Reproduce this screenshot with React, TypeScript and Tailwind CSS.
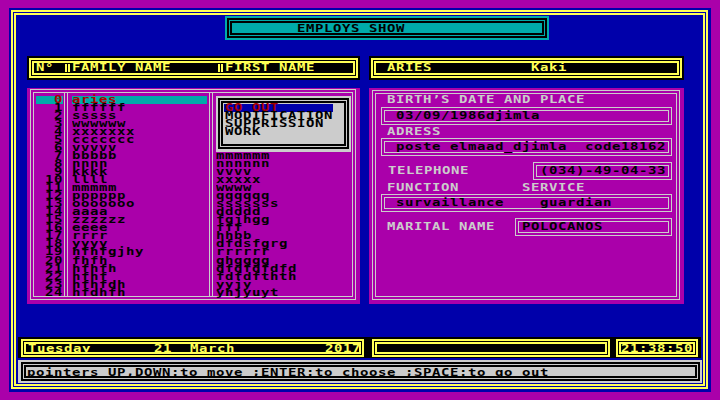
import React from "react";

const family = [
  "aries", "ffffff", "sssss", "wwwwww", "xxxxxxx", "ccccccc", "vvvvv", "bbbbb", "nnnn", "kkkk",
  "llll", "mmmmm", "pppppp", "ooooooo", "aaaa", "zzzzzz", "eeee", "rrrr", "yyyy", "hfhfgjhy",
  "fhfh", "hfhfh", "hfhf", "hfhfdh", "hfdhfh",
];

const firstNames = [
  "", "", "", "", "", "", "", "mmmmmm", "nnnnnn", "vvvv",
  "xxxxx", "wwww", "qqqqqq", "sssssss", "ddddd", "fgjhgg", "fff", "hhbb", "dfdsfgrg", "rrrrrr",
  "ghgggg", "dfdfdfdfd", "fdfdfthth", "yyjy", "yhjyuyt",
];

const menu = ["GO OUT", "MODIFICATION", "SUPPRISSION", "WORK"];

// squashed text so the 9px-wide glyphs fit an 8px DOS text row
function T({ children }: { children: React.ReactNode }) {
  return <span className="inline-block align-top h-[8px] scale-y-[0.7]">{children}</span>;
}

function YSep() {
  return <span className="inline-block align-top w-[5px] h-[8px] mx-[2px] border-x-2 border-[#ffff55]" />;
}

function Field({ className, children }: { className: string; children: React.ReactNode }) {
  return (
    <div className={"h-[18px] border-[4px] border-double border-[#cccccc] pt-[1px] text-black " + className}>
      <T>{children}</T>
    </div>
  );
}

function ListPanel() {
  return (
    <div className="w-[333px] h-[216px] bg-[#aa00aa] pt-[1px] pl-[3px] pr-[4px] pb-[4px]">
      <div className="h-full border-[4px] border-double border-[#cccccc] flex pl-[2px]">
        <div className="w-[27px] pt-[3px] text-right">
          {family.map((_, i) => (
            <div key={i} className={i === 0 ? "h-[8px] bg-[#00aaaa] text-[#aa0000]" : "h-[8px] text-black"}>
              <T>{i}</T>
            </div>
          ))}
        </div>
        <div className="w-[9px] h-full flex">
          <div className="ml-[1px] w-[1px] bg-[#cccccc]" />
          <div className="ml-[2px] w-[1px] bg-[#cccccc]" />
        </div>
        <div className="w-[135px] pt-[3px]">
          {family.map((n, i) => (
            <div key={i} className={i === 0 ? "h-[8px] bg-[#00aaaa] text-[#aa0000]" : "h-[8px] text-black"}>
              <T>{n}</T>
            </div>
          ))}
        </div>
        <div className="w-[9px] h-full flex">
          <div className="ml-[2px] w-[1px] bg-[#cccccc]" />
          <div className="ml-[2px] w-[1px] bg-[#cccccc]" />
        </div>
        <div className="relative w-[135px] pt-[3px]">
          {firstNames.map((n, i) => (
            <div key={i} className="h-[8px] text-black">
              {n && <T>{n}</T>}
            </div>
          ))}
          <div className="absolute top-[3px] left-0 w-[135px] h-[56px] bg-[#cccccc] pt-[2px] pl-[2px] pr-[2px] pb-[3px]">
            <div className="h-full border-[5px] border-double border-black pt-[1px] pl-[1px]">
              {menu.map((m, i) => (
                <div key={m} className={i === 0 ? "w-[109px] h-[8px] pl-[1px] bg-[#0000aa] text-[#aa0000]" : "h-[8px] pl-[1px] text-black"}>
                  <T>{m}</T>
                </div>
              ))}
            </div>
          </div>
        </div>
      </div>
    </div>
  );
}

function DetailPanel() {
  return (
    <div className="w-[315px] h-[216px] bg-[#aa00aa] pt-[2px] pl-[3px] pr-[4px] pb-[4px]">
      <div className="h-full border-[4px] border-double border-[#cccccc] flex flex-col text-[#cccccc]">
        <div className="mt-[2px] ml-[11px] h-[8px]"><T>BIRTH’S DATE AND PLACE</T></div>
        <Field className="mt-[3px] ml-[5px] w-[291px] pl-[11px]">03/09/1986djimla</Field>
        <div className="mt-[3px] ml-[11px] h-[8px]"><T>ADRESS</T></div>
        <Field className="mt-[2px] ml-[5px] w-[291px] pl-[11px]">{"poste elmaad_djimla  code18162"}</Field>
        <div className="mt-[6px] flex items-center">
          <div className="ml-[12px] w-[145px] h-[8px]"><T>TELEPHONE</T></div>
          <Field className="w-[139px] pl-[3px]">(034)-49-04-33</Field>
        </div>
        <div className="mt-[4px] ml-[11px] h-[8px]"><T>{"FUNCTION       SERVICE"}</T></div>
        <Field className="mt-[2px] ml-[5px] w-[291px] pl-[11px]">{"survaillance    guardian"}</Field>
        <div className="mt-[6px] flex items-center">
          <div className="ml-[11px] w-[128px] h-[8px]"><T>MARITAL NAME</T></div>
          <Field className="w-[157px] pl-[3px]">POLOCANOS</Field>
        </div>
      </div>
    </div>
  );
}

export default function App() {
  return (
    <div className="w-[720px] h-[400px] bg-[#aa00aa] pt-[8px] pl-[9px] font-['DejaVu_Sans_Mono',monospace] font-bold text-[14px] leading-[8px] tracking-[0.57px] whitespace-pre">
      <div className="w-[702px] h-[384px] bg-[#0000aa] pt-[2px] pl-[2px]">
        <div className="w-[697px] h-[379px] border-[5px] border-double border-[#ffff55] flex flex-col">
          <div className="mt-[1px] ml-[209px] w-[324px] h-[24px] bg-[#00aaaa] p-[2px]">
            <div className="h-[20px] border-[5px] border-double border-black pl-[65px] pt-[1px] text-black">
              <T>EMPLOYS SHOW</T>
            </div>
          </div>

          <div className="mt-[16px] ml-[11px] flex gap-[9px]">
            <div className="w-[333px] h-[24px] bg-black p-[2px]">
              <div className="h-[20px] border-[5px] border-double border-[#ffff55] pl-[2px] pt-[1px] text-[#ffff55]">
                <T>{"N° "}</T>
                <YSep />
                <T>{"FAMILY NAME     "}</T>
                <YSep />
                <T>{"FIRST NAME"}</T>
              </div>
            </div>
            <div className="w-[315px] h-[24px] bg-black p-[2px]">
              <div className="h-[20px] border-[5px] border-double border-[#ffff55] pl-[11px] pt-[1px] text-[#ffff55]">
                <T>{"ARIES           Kaki"}</T>
              </div>
            </div>
          </div>

          <div className="mt-[8px] ml-[11px] flex gap-[9px]">
            <ListPanel />
            <DetailPanel />
          </div>

          <div className="mt-[33px] ml-[2px] w-[683px] h-[21px] bg-black pt-[2px] pl-[3px] flex">
            <div className="w-[343px] h-[18px] border-[5px] border-double border-[#ffff55] pl-[2px] text-[#ffff55]">
              <T>{"Tuesday       21  March          2017"}</T>
            </div>
            <div className="ml-[8px] w-[238px] h-[18px] border-[5px] border-double border-[#ffff55]" />
            <div className="ml-[6px] w-[82px] h-[18px] border-[5px] border-double border-[#ffff55] text-[#ffff55]">
              <T>21:38:50</T>
            </div>
          </div>

          <div className="mt-[2px] ml-[2px] w-[684px] h-[23px] bg-[#cccccc] pt-[2px] pl-[3px]">
            <div className="w-[679px] h-[19px] border-[5px] border-double border-black pl-[1px] pt-[1px] text-black">
              <T>pointers UP,DOWN:to move ;ENTER:to choose ;SPACE:to go out</T>
            </div>
          </div>
        </div>
      </div>
    </div>
  );
}
